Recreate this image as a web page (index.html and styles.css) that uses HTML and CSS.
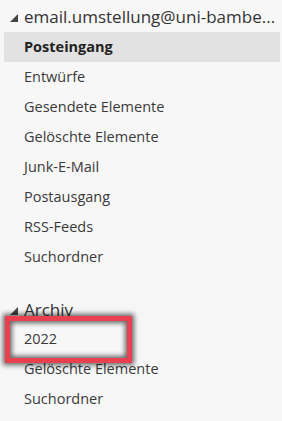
FILE: index.html
```html
<!DOCTYPE html>
<html lang="de">
<head>
<meta charset="utf-8">
<link rel="stylesheet" href="styles.css">
</head>
<body>
<div class="pane">
  <div class="group">
    <div class="group-head">
      <svg class="caret" width="8" height="8" viewBox="0 0 8 8"><polygon points="0,8 8,0 8,8" fill="#444"/></svg>
      <span class="group-title">email.umstellung@uni-bambe...</span>
    </div>
    <div class="item selected">Posteingang</div>
    <div class="item">Entwürfe</div>
    <div class="item">Gesendete Elemente</div>
    <div class="item">Gelöschte Elemente</div>
    <div class="item">Junk-E-Mail</div>
    <div class="item">Postausgang</div>
    <div class="item">RSS-Feeds</div>
    <div class="item">Suchordner</div>
  </div>
  <div class="group archive">
    <div class="group-head">
      <svg class="caret" width="8" height="8" viewBox="0 0 8 8"><polygon points="0,8 8,0 8,8" fill="#444"/></svg>
      <span class="group-title">Archiv</span>
    </div>
    <div class="item">2022</div>
    <div class="item">Gelöschte Elemente</div>
    <div class="item">Suchordner</div>
  </div>
  <div class="highlight"></div>
</div>
</body>
</html>
```
FILE: styles.css
```css
html, body {
  margin: 0;
  padding: 0;
  background: #f7f7f7;
}
.pane {
  position: relative;
  width: 282px;
  height: 421px;
  overflow: hidden;
  font-family: "Open Sans", "Noto Sans", sans-serif;
  color: #333;
}
.group-head {
  display: flex;
  align-items: center;
  height: 32px;
  padding-left: 10px;
}
.caret {
  flex: none;
  margin-top: 4px;
}
.group-title {
  margin-left: 6px;
  font-size: 17px;
  color: #333;
  white-space: nowrap;
}
.item {
  height: 30px;
  line-height: 30px;
  margin: 0 2px 0 4px;
  padding-left: 20px;
  font-size: 14.5px;
  color: #3a3a3a;
  white-space: nowrap;
}
.item.selected {
  background: #e2e2e2;
  font-weight: 700;
  color: #222;
}
.archive {
  margin-top: 22px;
}
.archive .group-head {
  height: 30px;
}
.highlight {
  position: absolute;
  left: 5px;
  top: 316px;
  width: 117px;
  height: 37px;
  border: 5px solid #e8404e;
  box-shadow: 0 0 5px 2px rgba(0,0,0,0.6), inset 0 0 5px 2px rgba(0,0,0,0.6);
}
```
